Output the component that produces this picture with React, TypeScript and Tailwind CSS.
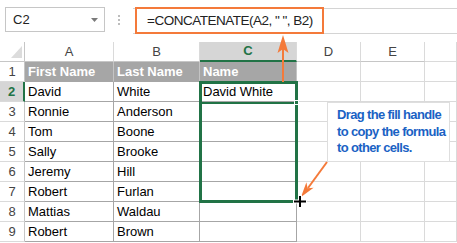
import React from "react";

type Row = { n: number; a: string; b: string; c: string };

const rows: Row[] = [
  { n: 1, a: "First Name", b: "Last Name", c: "Name" },
  { n: 2, a: "David", b: "White", c: "David White" },
  { n: 3, a: "Ronnie", b: "Anderson", c: "" },
  { n: 4, a: "Tom", b: "Boone", c: "" },
  { n: 5, a: "Sally", b: "Brooke", c: "" },
  { n: 6, a: "Jeremy", b: "Hill", c: "" },
  { n: 7, a: "Robert", b: "Furlan", c: "" },
  { n: 8, a: "Mattias", b: "Waldau", c: "" },
  { n: 9, a: "Robert", b: "Brown", c: "" },
];

const colHead = "flex items-center justify-center border-r border-b border-r-[#dadada] border-b-[#c6c6c6] text-[13px] text-[#444]";
const colHeadActive = "flex items-center justify-center border-r border-b-2 border-r-[#dadada] border-b-[#217346] bg-[#d6d6d6] text-[13px] font-bold text-[#217346]";
const rowHead = "flex items-center justify-center border-r border-b border-r-[#c6c6c6] border-b-[#dadada] text-[13px] text-[#444]";
const rowHeadActive = "flex items-center justify-center border-r-2 border-b border-r-[#217346] border-b-[#dadada] bg-[#d6d6d6] text-[13px] font-bold text-[#217346]";
const titleCell = "flex items-center pl-[3px] border-r border-b border-r-[#c4c4c4] border-b-[#a6a6a6] bg-[#a6a6a6] text-[13px] font-bold text-white whitespace-nowrap";
const dataCell = "flex items-center pl-[3px] border-r border-b border-[#a6a6a6] text-[13px] text-black whitespace-nowrap overflow-hidden";
const emptyCell = "border-r border-b border-[#dadada]";

function TopBar() {
  return (
    <div className="flex items-start h-[42px] pt-[7px] pl-[5px]">
      <div className="flex items-center justify-between w-[100px] h-[25px] border border-[#c6c6c6] pl-[7px] pr-[6px] text-[13px] text-[#222]">
        <span>C2</span>
        <svg width="7" height="4" viewBox="0 0 7 4">
          <polygon points="0,0 7,0 3.5,4" fill="#7a7a7a" />
        </svg>
      </div>
      <div className="flex flex-col items-center justify-center gap-[2px] w-[28px] h-[25px]">
        <div className="w-[2px] h-[2px] bg-[#bdbdbd]" />
        <div className="w-[2px] h-[2px] bg-[#bdbdbd]" />
        <div className="w-[2px] h-[2px] bg-[#bdbdbd]" />
      </div>
      <div className="relative flex-1 flex items-center h-[26px] mt-[1px] border-y border-[#d4d4d4] pl-[14px] text-[13.5px] tracking-[-0.5px] text-[#222] whitespace-nowrap">
        =CONCATENATE(A2, " ", B2)
        <div className="absolute left-[2px] top-[-2px] w-[189px] h-[27px] border-2 border-[#f47a3a]" />
      </div>
    </div>
  );
}

function Sheet() {
  return (
    <div className="grid grid-cols-[25px_89px_86px_97px_64px_64px_32px] auto-rows-[20px]">
      <div className="relative border-r border-b border-r-[#c6c6c6] border-b-[#c6c6c6]">
        <svg className="absolute left-0 top-0" width="25" height="20" viewBox="0 0 25 20">
          <polygon points="11,16 22,16 22,4" fill="#dcdcdc" />
        </svg>
      </div>
      <div className={colHead}>A</div>
      <div className={colHead}>B</div>
      <div className={colHeadActive}>C</div>
      <div className={colHead}>D</div>
      <div className={colHead}>E</div>
      <div className={emptyCell} />
      {rows.map((r) => (
        <React.Fragment key={r.n}>
          <div className={r.n === 2 ? rowHeadActive : rowHead}>{r.n}</div>
          <div className={r.n === 1 ? titleCell : dataCell}>{r.a}</div>
          <div className={r.n === 1 ? titleCell : dataCell}>{r.b}</div>
          <div className={r.n === 1 ? titleCell : dataCell}>{r.c}</div>
          <div className={emptyCell} />
          <div className={emptyCell} />
          <div className={emptyCell} />
        </React.Fragment>
      ))}
    </div>
  );
}

export default function App() {
  return (
    <div className="relative w-[457px] h-[243px] overflow-hidden bg-white font-['Liberation_Sans',Arial,sans-serif]">
      <TopBar />
      <Sheet />

      {/* selection range C2:C7 */}
      <div className="absolute left-[199px] top-[81px] w-[99px] h-[122px] border-[3px] border-[#217346] pointer-events-none" />
      <div className="absolute left-[199px] top-[102px] w-[99px] h-[2px] bg-[#217346]" />
      <div className="absolute left-[294px] top-[100px] w-[5px] h-[5px] bg-[#217346] border border-white" />

      {/* callout */}
      <div className="absolute left-[327px] top-[102px] w-[123px] h-[60px] bg-white border border-[#dedede] pl-[9px] pt-[4px] text-[13px] tracking-[-0.65px] font-bold leading-[16.5px] text-[#1a62c4] whitespace-nowrap">
        <div>Drag the fill handle</div>
        <div>to copy the formula</div>
        <div>to other cells.</div>
      </div>

      <svg className="absolute left-0 top-0 pointer-events-none" width="457" height="243" viewBox="0 0 457 243">
        <line x1="283" y1="82" x2="283" y2="48" stroke="#f47a3a" strokeWidth="2" />
        <polygon points="283,35 288.5,53 283,49 277.5,53" fill="#f47a3a" />
        <line x1="327" y1="162" x2="308" y2="188" stroke="#f47a3a" strokeWidth="2" />
        <polygon points="301,197 313.6,187.7 307.6,188.2 306.4,182.3" fill="#f47a3a" />
        <line x1="293" y1="201.5" x2="307" y2="201.5" stroke="#fff" strokeWidth="4" />
        <line x1="300" y1="195" x2="300" y2="208" stroke="#fff" strokeWidth="4" />
        <line x1="294" y1="201.5" x2="306" y2="201.5" stroke="#000" strokeWidth="2" />
        <line x1="300" y1="196" x2="300" y2="207" stroke="#000" strokeWidth="2" />
      </svg>
    </div>
  );
}
